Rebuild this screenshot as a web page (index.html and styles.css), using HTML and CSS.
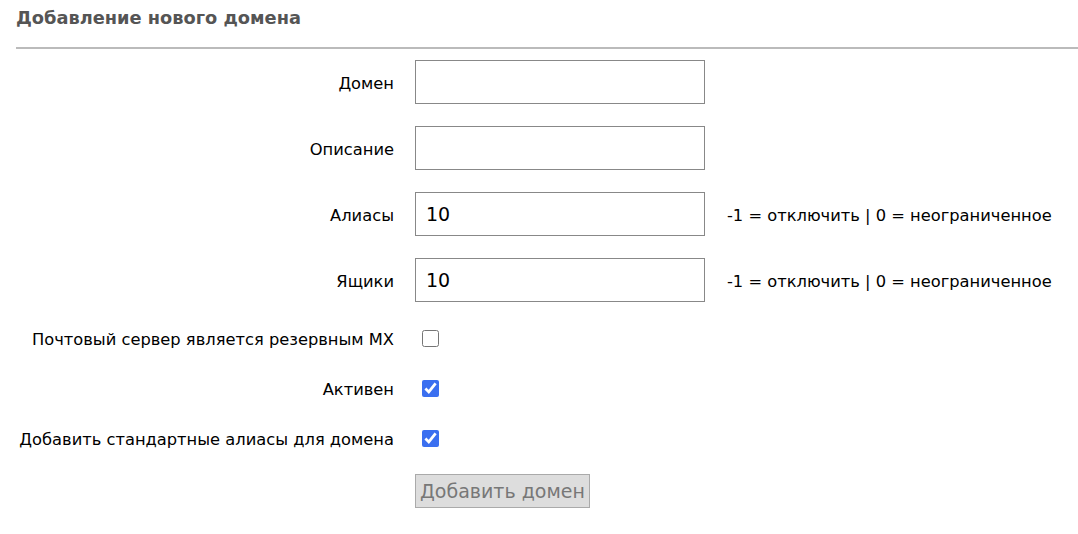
FILE: index.html
```html
<!DOCTYPE html>
<html lang="ru">
<head>
<meta charset="utf-8">
<title>Добавление нового домена</title>
<link rel="stylesheet" href="styles.css">
</head>
<body>
<div class="page">
  <h2 class="title">Добавление нового домена</h2>
  <form class="form">
    <label class="lbl" for="domain">Домен</label>
    <span class="cell"><input class="txt" id="domain" type="text"></span>
    <span class="help"></span>

    <label class="lbl" for="desc">Описание</label>
    <span class="cell"><input class="txt" id="desc" type="text"></span>
    <span class="help"></span>

    <label class="lbl" for="aliases">Алиасы</label>
    <span class="cell"><input class="txt" id="aliases" type="text" value="10"></span>
    <span class="help">-1 = отключить <span class="sep">|</span> 0 = неограниченное</span>

    <label class="lbl" for="mailboxes">Ящики</label>
    <span class="cell"><input class="txt" id="mailboxes" type="text" value="10"></span>
    <span class="help">-1 = отключить <span class="sep">|</span> 0 = неограниченное</span>

    <label class="lbl" for="backup">Почтовый сервер является резервным MX</label>
    <span class="cell chk-cell"><input class="chk" id="backup" type="checkbox"></span>
    <span class="help"></span>

    <label class="lbl" for="active">Активен</label>
    <span class="cell chk-cell"><input class="chk" id="active" type="checkbox" checked></span>
    <span class="help"></span>

    <label class="lbl" for="defaults">Добавить стандартные алиасы для домена</label>
    <span class="cell chk-cell"><input class="chk" id="defaults" type="checkbox" checked></span>
    <span class="help"></span>

    <span class="lbl"></span>
    <span class="cell"><button class="btn" type="button" disabled>Добавить домен</button></span>
    <span class="help"></span>
  </form>
</div>
</body>
</html>
```
FILE: styles.css
```css
html, body {
  margin: 0;
  padding: 0;
  background: #fff;
}

body {
  font-family: "DejaVu Sans", Verdana, sans-serif;
  font-size: 16.3px;
  color: #000;
}

.page {
  padding: 7px 0 0 16px;
}

.title {
  margin: 0;
  font-size: 17.8px;
  line-height: 22px;
  font-weight: bold;
  color: #555;
  padding-bottom: 18px;
  border-bottom: 2px solid #bbb;
}

.form {
  display: grid;
  grid-template-columns: 378px 290px auto;
  column-gap: 21px;
  align-items: center;
}

.lbl, .cell, .help {
  padding: 11px 0;
}

.lbl, .help {
  padding-top: 12px;
  padding-bottom: 10px;
}

.lbl {
  text-align: right;
}

.cell {
  display: flex;
  align-items: center;
}

.txt {
  box-sizing: border-box;
  width: 290px;
  height: 44px;
  margin: 0;
  border: 1px solid #888;
  padding: 0 10px;
  font-family: "DejaVu Sans", Verdana, sans-serif;
  font-size: 19px;
  color: #000;
  outline: none;
}

.help {
  padding-left: 1px;
}

.chk-cell {
  height: 28px;
}

.chk {
  width: 17px;
  height: 17px;
  margin: 0 0 0 7px;
  accent-color: #3b6ff0;
}

.btn {
  height: 34px;
  padding: 0 4px;
  border: 1px solid #aaa;
  background: #ddd;
  color: #777;
  font-family: "DejaVu Sans", Verdana, sans-serif;
  font-size: 19px;
  border-radius: 0;
}
```
